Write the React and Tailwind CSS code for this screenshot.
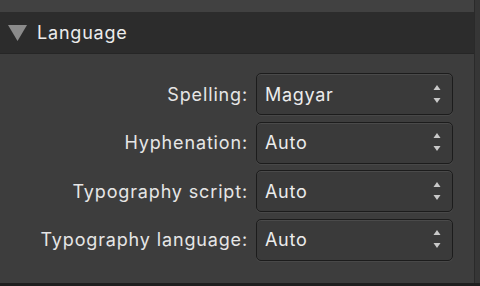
import React from 'react';

const rows = [
  { label: 'Spelling:', value: 'Magyar' },
  { label: 'Hyphenation:', value: 'Auto' },
  { label: 'Typography script:', value: 'Auto' },
  { label: 'Typography language:', value: 'Auto' },
];

const Stepper = () => (
  <svg width="8" height="19" viewBox="0 0 8 19" className="shrink-0">
    <path d="M4 0 L7.5 5 L0.5 5 Z" fill="#c9c9c9" />
    <path d="M0.5 13 L7.5 13 L4 18 Z" fill="#c9c9c9" />
  </svg>
);

const App = () => {
  return (
    <div
      className="w-[480px] h-[286px] bg-[#1e1e1e] flex overflow-hidden text-[#e6e6e6]"
      style={{ fontFamily: 'Inter, "Noto Sans", sans-serif' }}
    >
      <div className="w-[474px] h-[283px] bg-[#3d3d3d] flex flex-col">
        <div className="h-[12px] bg-[#414141]" />
        <div className="h-[42px] bg-[#2c2c2c] border-b border-[#262626] flex items-center pl-[8px]">
          <svg width="19" height="16" viewBox="0 0 19 16" className="mt-[1px]">
            <path d="M0 0 L19 0 L9.5 16 Z" fill="#8b8b8b" />
          </svg>
          <span className="ml-[10px] text-[18px] text-[#ececec] tracking-[0.8px]">Language</span>
        </div>
        <div className="pt-[19px] flex flex-col gap-[6.67px]">
          {rows.map((row) => (
            <div key={row.label} className="flex items-center">
              <div className="w-[248px] text-right text-[18px] text-[#e6e6e6] tracking-[0.85px] whitespace-nowrap">
                {row.label}
              </div>
              <div className="ml-[8px] w-[197px] h-[42px] rounded-[5px] bg-[#3a3a3a] border border-[#1c1c1c] shadow-[inset_0_1px_0_#4a4a4a,0_1px_0_#484848] flex items-center justify-between pl-[8px] pr-[11px]">
                <span className="text-[18px] text-[#ececec] tracking-[0.7px]">{row.value}</span>
                <Stepper />
              </div>
            </div>
          ))}
        </div>
      </div>
      <div className="w-[1px] h-[283px] bg-[#2a2a2a]" />
      <div className="w-[5px] h-[283px] bg-[#363636]" />
    </div>
  );
};

export default App;
